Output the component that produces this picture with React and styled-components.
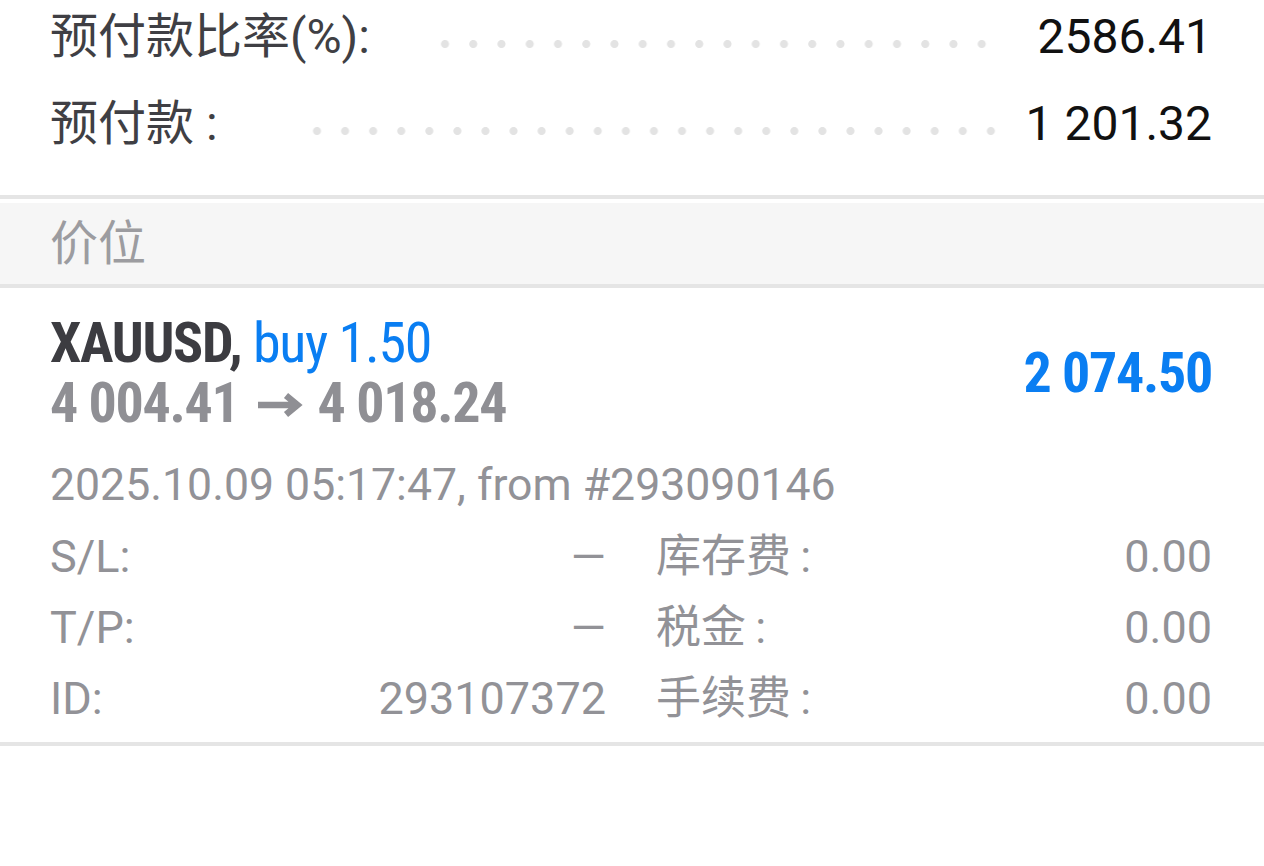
import React from "react";
import styled, { createGlobalStyle } from "styled-components";

const GlobalStyle = createGlobalStyle`
  html, body {
    margin: 0;
    padding: 0;
    background: #fff;
  }
  body {
    font-family: Roboto, "Noto Sans CJK SC", sans-serif;
    -webkit-font-smoothing: antialiased;
  }
`;

const Screen = styled.div`
  width: 1264px;
  height: 866px;
  overflow: hidden;
  background: #fff;
`;

const Summary = styled.section`
  display: flex;
  flex-direction: column;
  gap: 15px;
  padding: 1px 52px 35px 50px;
  border-bottom: 4px solid #e5e5e5;
`;

const SummaryRow = styled.div`
  display: flex;
  height: 72px;
  font-size: 48px;
  line-height: 72px;
  white-space: nowrap;
`;

const SummaryLabel = styled.span`
  color: #3f3f44;
`;

const Leader = styled.span`
  flex: 1;
  margin-left: ${(p) => p.$lead}px;
  margin-right: ${(p) => p.$trail}px;
  background-image: radial-gradient(circle at 14px 5px, #e3e3e3 3.6px, transparent 4.4px);
  background-size: 28px 10px;
  background-repeat: space no-repeat;
  background-position: 0 38px;
`;

const SummaryValue = styled.span`
  color: #111;
`;

const SectionHeader = styled.div`
  margin-top: 4px;
  height: 81px;
  padding-left: 50px;
  background: #f6f6f6;
  border-bottom: 4px solid #e5e5e5;
  font-size: 48px;
  line-height: 81px;
  color: #9c9ca0;
`;

const PositionCard = styled.article`
  padding: 25px 52px 8px 50px;
  border-bottom: 4px solid #e5e5e5;
`;

const CardHead = styled.div`
  display: flex;
  align-items: center;
  justify-content: space-between;
`;

const TitleLine = styled.div`
  font-family: "Roboto Condensed", Roboto, sans-serif;
  font-size: 56px;
  line-height: 60px;
  letter-spacing: -1.3px;
  white-space: nowrap;
`;

const Symbol = styled.span`
  font-weight: 700;
  color: #3c3c41;
`;

const Side = styled.span`
  color: #0a7ef2;
`;

const Prices = styled(TitleLine)`
  display: flex;
  align-items: center;
  font-weight: 700;
  color: #8f8f94;
`;

const Arrow = styled.svg`
  width: 46px;
  height: 24px;
  margin: 4px 15px 0 18px;
  flex: none;
`;

const Profit = styled(TitleLine)`
  font-weight: 700;
  color: #0a7ef2;
`;

const Opened = styled.div`
  margin-top: 22px;
  font-size: 44.6px;
  line-height: 60px;
  color: #929297;
  white-space: nowrap;
`;

const Details = styled.div`
  display: grid;
  grid-template-columns: 1fr 1fr;
  column-gap: 50px;
  margin-top: 6px;
  font-size: 45px;
  line-height: 71px;
  color: #929297;
`;

const Field = styled.div`
  display: flex;
  justify-content: space-between;
  white-space: nowrap;
`;

const details = [
  ["S/L:", "—"],
  ["库存费\u2009:", "0.00"],
  ["T/P:", "—"],
  ["税金\u2009:", "0.00"],
  ["ID:", "293107372"],
  ["手续费\u2009:", "0.00"],
];

export default function App() {
  return (
    <Screen>
      <GlobalStyle />
      <Summary>
        <SummaryRow>
          <SummaryLabel>预付款比率(%):</SummaryLabel>
          <Leader $lead={61} $trail={41} />
          <SummaryValue>2586.41</SummaryValue>
        </SummaryRow>
        <SummaryRow>
          <SummaryLabel>预付款 :</SummaryLabel>
          <Leader $lead={85} $trail={21} />
          <SummaryValue>1 201.32</SummaryValue>
        </SummaryRow>
      </Summary>

      <SectionHeader>价位</SectionHeader>

      <PositionCard>
        <CardHead>
          <div>
            <TitleLine>
              <Symbol>XAUUSD,</Symbol> <Side>buy 1.50</Side>
            </TitleLine>
            <Prices>
              <span>4 004.41</span>
              <Arrow viewBox="0 0 46 24" aria-label="→">
                <path
                  d="M1 12 H40 M29 2.5 L40.5 12 L29 21.5"
                  fill="none"
                  stroke="#8f8f94"
                  strokeWidth="6.5"
                  strokeLinejoin="miter"
                />
              </Arrow>
              <span>4 018.24</span>
            </Prices>
          </div>
          <Profit>2 074.50</Profit>
        </CardHead>
        <Opened>2025.10.09 05:17:47, from #293090146</Opened>
        <Details>
          {details.map(([label, value]) => (
            <Field key={label}>
              <span>{label}</span>
              <span>{value}</span>
            </Field>
          ))}
        </Details>
      </PositionCard>
    </Screen>
  );
}
